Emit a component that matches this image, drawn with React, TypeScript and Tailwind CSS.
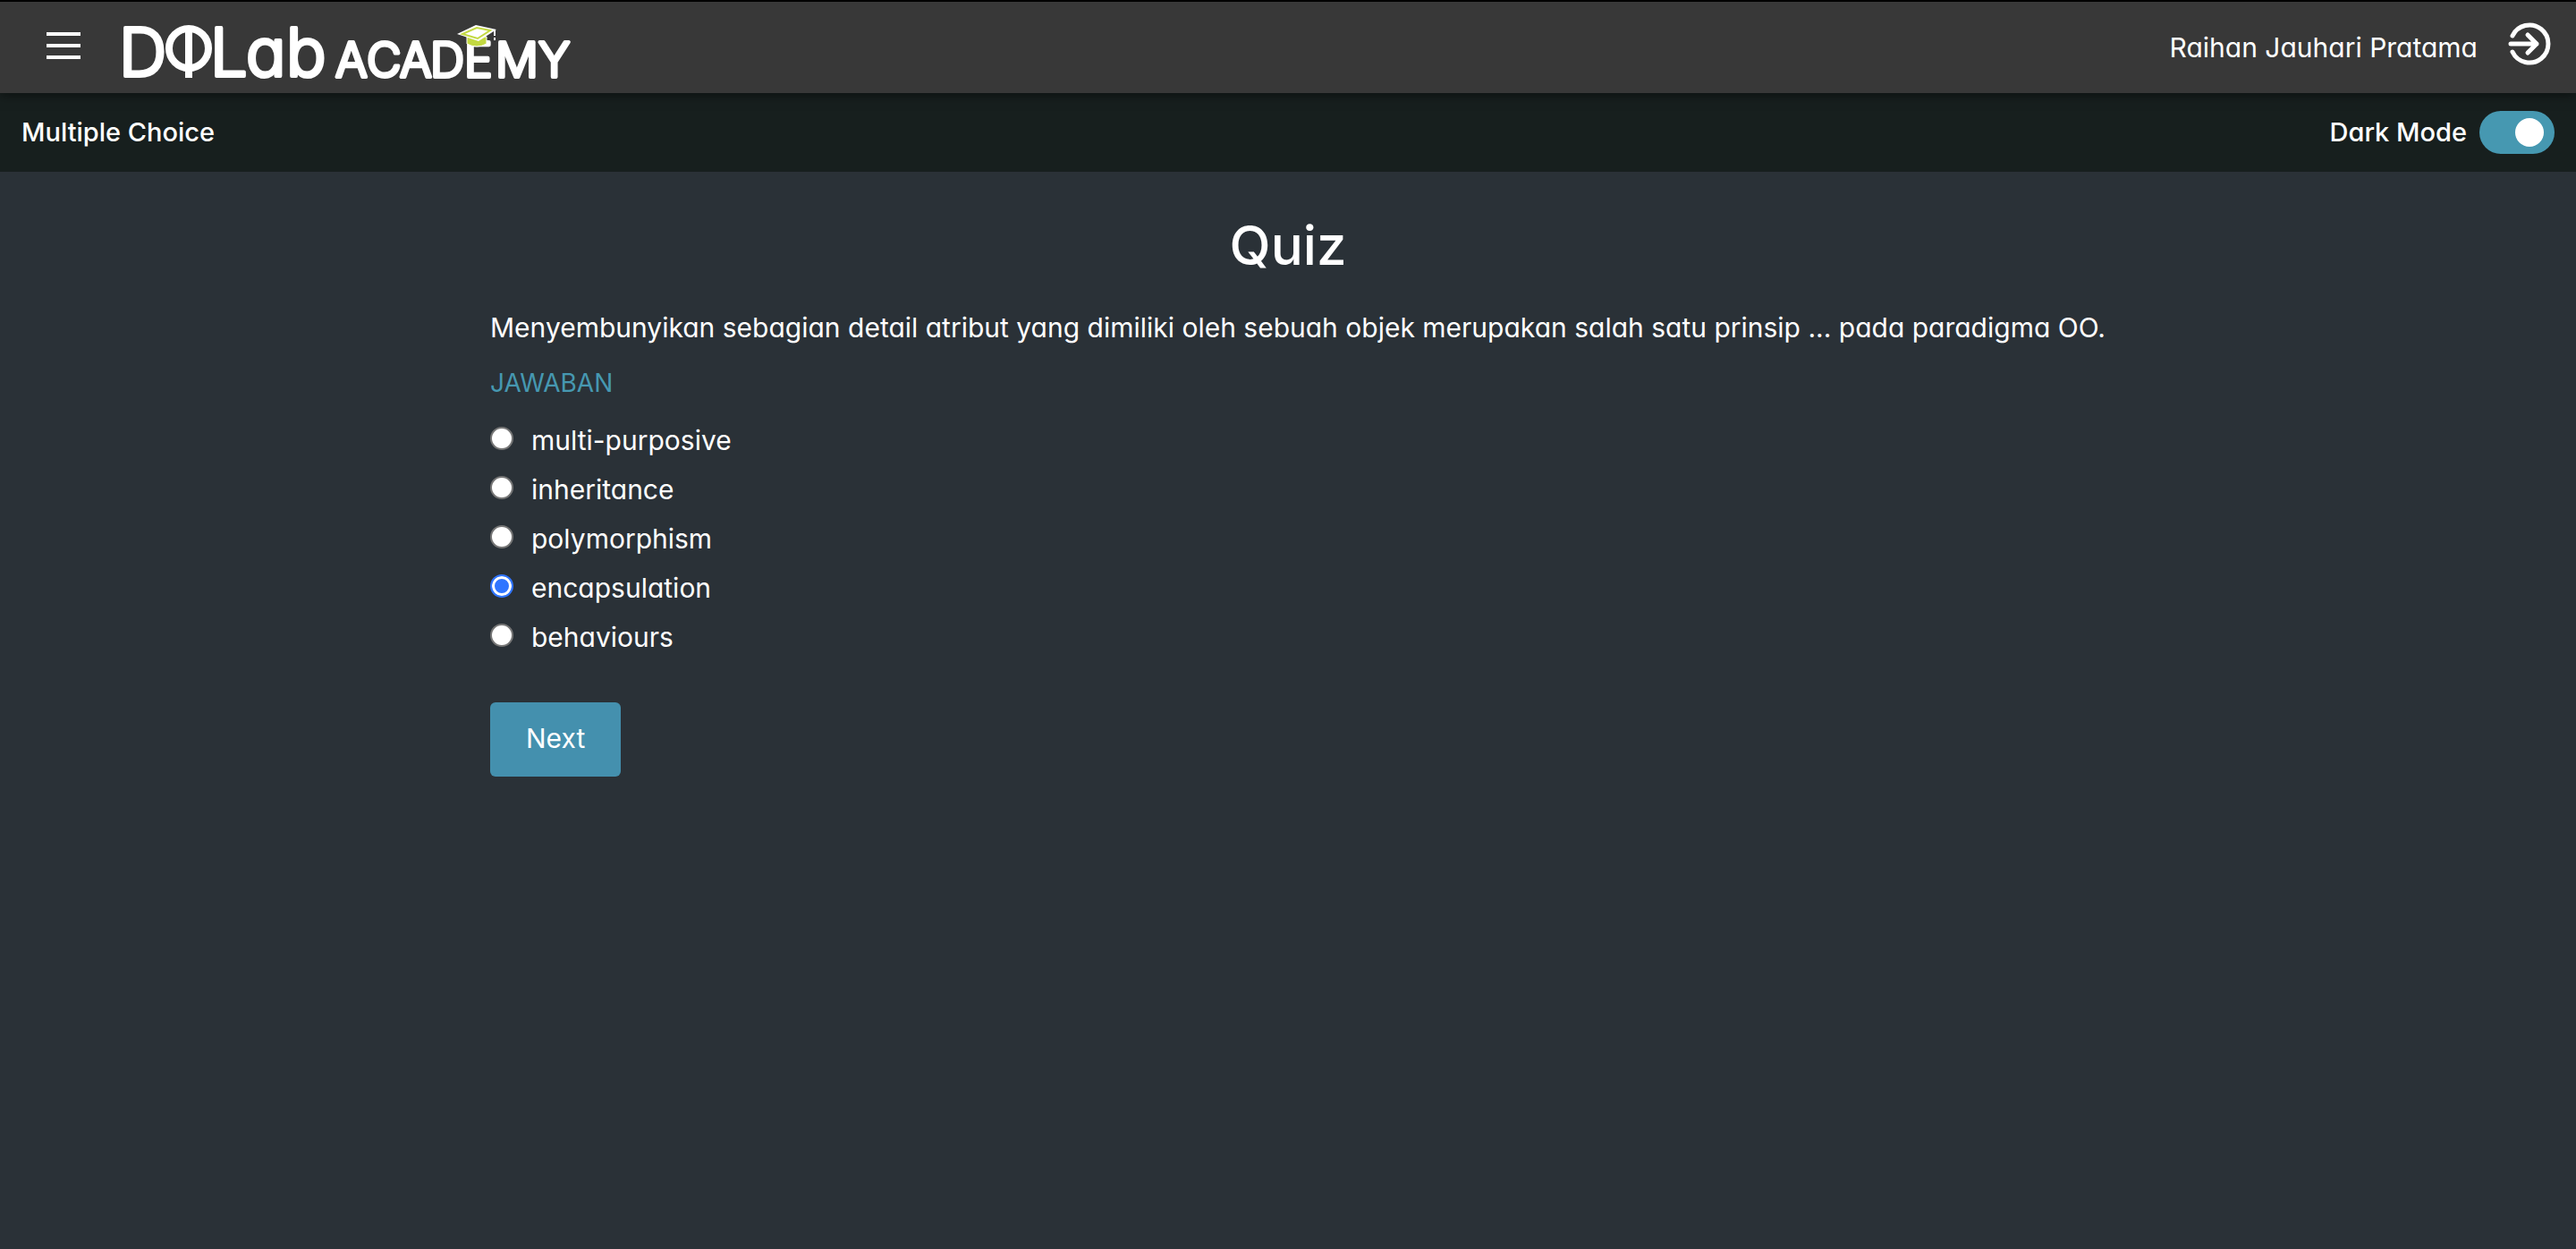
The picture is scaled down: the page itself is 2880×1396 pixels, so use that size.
import { useState } from 'react';

const options = ['multi-purposive', 'inheritance', 'polymorphism', 'encapsulation', 'behaviours'];

function Logo() {
  return (
    <svg className="h-24 w-[524px]" viewBox="-10 -16 524 96" role="img" aria-label="DQLab Academy">
      <g fill="#fff" stroke="#fff" strokeLinejoin="round" strokeLinecap="round" fontWeight="300" strokeWidth="4">
        <text x="-5 97 137 182" y="58" fontSize="74">DLab</text>
        <text x="237 272 309 343 381 416 464" y="59" fontSize="53">ACADEMY</text>
      </g>
      <ellipse cx="73" cy="27" rx="22" ry="22" fill="none" stroke="#fff" strokeWidth="8" />
      <path d="M73 6V60" stroke="#fff" strokeWidth="8" />
      <path d="M384 14v8q11 6 22 0v-8z" fill="#c3d941" stroke="#fff" strokeWidth="1" />
      <path d="M373 11 394 1 417 6 397 19z" fill="#fff" />
      <path d="M379 11 395 4 410 7 396 16z" fill="#fff" stroke="#c3d941" strokeWidth="2" />
      <path d="M415 6v12" stroke="#fff" strokeWidth="2" strokeDasharray="7 2" />
    </svg>
  );
}

export default function App() {
  const [answer, setAnswer] = useState('encapsulation');
  const [dark, setDark] = useState(true);
  return (
    <div className="flex min-h-screen flex-col bg-[#2a3137] font-['Inter',sans-serif] text-[30px] leading-[44px] text-white [font-feature-settings:'cv11']">
      <header className="z-10 flex h-[104px] items-center border-t-2 border-black bg-[#383838] pr-7 pl-[52px] shadow-[0_2px_12px_rgba(0,0,0,0.5)]">
        <button type="button" aria-label="Menu" className="mb-1 flex w-[38px] flex-col gap-[9px]">
          <span className="h-1 bg-white" />
          <span className="h-1 bg-white" />
          <span className="h-1 bg-white" />
        </button>
        <a href="#home" className="mt-3 ml-[38px]">
          <Logo />
        </a>
        <span className="ml-auto">Raihan Jauhari Pratama</span>
        <button type="button" aria-label="Log out" className="mb-2 ml-[34px]">
          <svg className="size-12" viewBox="0 0 48 48" fill="none" stroke="#fff" strokeWidth="5" strokeLinecap="round" strokeLinejoin="round">
            <path d="M5 15A21 21 0 1 1 5 33" />
            <path d="M3 24H32M22 14 32 24 22 34" />
          </svg>
        </button>
      </header>
      <div className="flex h-[88px] items-center justify-between bg-[#171f1e] px-6 text-[29px] font-medium">
        <span>Multiple Choice</span>
        <label className="flex items-center gap-[14px]">
          Dark Mode
          <input
            type="checkbox"
            role="switch"
            checked={dark}
            onChange={() => setDark(!dark)}
            className="h-12 w-[84px] appearance-none rounded-full bg-gray-400 p-2 before:block before:size-8 before:rounded-full before:bg-white checked:bg-[#4698b1] checked:before:ml-8"
          />
        </label>
      </div>
      <main className="mx-auto w-full max-w-[1784px] pt-[46px]">
        <h1 className="text-center text-[60px] leading-[72px] font-medium">Quiz</h1>
        <p className="mt-[34px] whitespace-nowrap">
          Menyembunyikan sebagian detail atribut yang dimiliki oleh sebuah objek merupakan salah satu prinsip ... pada paradigma OO.
        </p>
        <form onSubmit={(e) => e.preventDefault()} className="mt-[18px]">
          <fieldset>
            <legend className="text-[28px] text-[#4698b1]">JAWABAN</legend>
            <div className="mt-[14px] flex flex-col items-start">
              {options.map((o) => (
                <label key={o} className="flex h-[55px] items-center gap-5">
                  <input
                    type="radio"
                    name="answer"
                    value={o}
                    checked={answer === o}
                    onChange={() => setAnswer(o)}
                    className="mb-1 size-[26px] appearance-none rounded-full border-2 border-[#767676] bg-white checked:border-[#3075ff] checked:bg-[#3075ff] checked:shadow-[inset_0_0_0_3px_#fff]"
                  />
                  {o}
                </label>
              ))}
            </div>
          </fieldset>
          <button type="submit" className="mt-[46px] h-[83px] rounded-md bg-[#4490ae] px-10 pb-1">
            Next
          </button>
        </form>
      </main>
    </div>
  );
}
